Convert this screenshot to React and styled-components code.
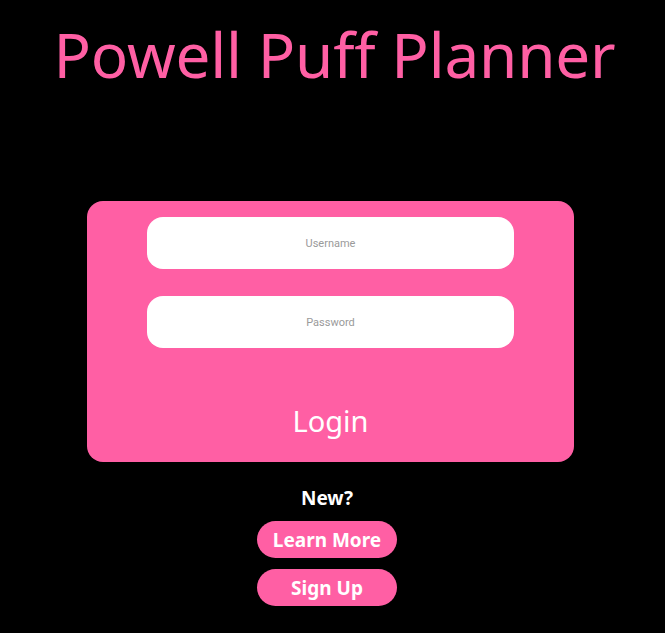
import styled, { createGlobalStyle } from "styled-components";

const PINK = "#ff5fa4";

const GlobalStyle = createGlobalStyle`
    html, body {
        margin: 0;
        padding: 0;
        background: #000000;
    }
    body {
        font-family: "Noto Sans", "Open Sans", sans-serif;
    }
`;

const Page = styled.div`
    display: flex;
    flex-direction: column;
    align-items: center;
    width: 661px;
    min-height: 633px;
    background: #000000;
`;

const Title = styled.h1`
    margin: 14px 0 0 0;
    padding-left: 8px;
    height: 80px;
    line-height: 80px;
    font-family: "Noto Sans", sans-serif;
    font-weight: 400;
    font-size: 62px;
    letter-spacing: -0.2px;
    color: ${PINK};
`;

const Card = styled.form`
    display: flex;
    flex-direction: column;
    align-items: center;
    box-sizing: border-box;
    width: 487px;
    height: 261px;
    margin-top: 107px;
    padding-top: 16px;
    background: ${PINK};
    border-radius: 16px;
`;

const Field = styled.input`
    box-sizing: border-box;
    width: 367px;
    height: 52px;
    margin-bottom: ${(p) => p.gap || 0}px;
    border: none;
    outline: none;
    border-radius: 16px;
    background: #ffffff;
    text-align: center;
    font-family: Roboto, sans-serif;
    font-size: 11px;
    color: #333333;

    &::placeholder {
        color: #9a9a9a;
    }
`;

const LoginBtn = styled.button`
    margin-top: 55px;
    padding: 0;
    border: none;
    background: transparent;
    font-family: "Noto Sans", sans-serif;
    font-size: 29px;
    line-height: 36px;
    color: #ffffff;
    cursor: pointer;
`;

const NewLabel = styled.div`
    margin-top: 23px;
    margin-right: 7px;
    font-family: "Noto Sans", sans-serif;
    font-weight: 700;
    font-size: 19px;
    line-height: 26px;
    color: #ffffff;
`;

const PillBtn = styled.button`
    width: 140px;
    height: 37px;
    margin-top: ${(p) => p.top}px;
    margin-right: 7px;
    padding: 0;
    border: none;
    border-radius: 19px;
    background: ${PINK};
    font-family: "Noto Sans", sans-serif;
    font-weight: 700;
    font-size: 19px;
    color: #ffffff;
    cursor: pointer;
`;

export default function App() {
    return (
        <>
            <GlobalStyle />
            <Page>
                <Title>Powell Puff Planner</Title>
                <Card onSubmit={(e) => e.preventDefault()}>
                    <Field placeholder="Username" gap={27} />
                    <Field placeholder="Password" type="password" />
                    <LoginBtn type="submit">Login</LoginBtn>
                </Card>
                <NewLabel>New?</NewLabel>
                <PillBtn top={10}>Learn More</PillBtn>
                <PillBtn top={11}>Sign Up</PillBtn>
            </Page>
        </>
    );
}
